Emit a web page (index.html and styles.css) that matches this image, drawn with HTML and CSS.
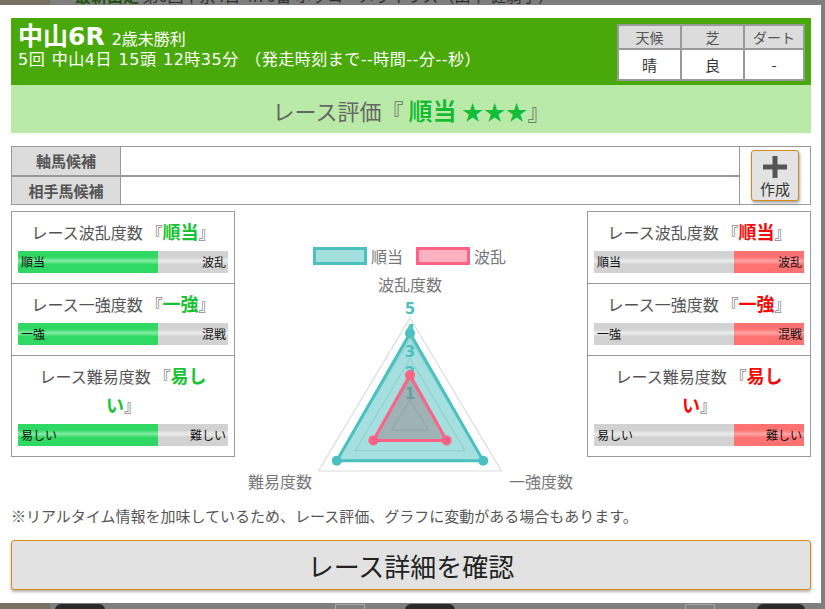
FILE: index.html
```html
<!DOCTYPE html>
<html lang="ja">
<head>
<meta charset="utf-8">
<title>中山6R</title>
<link rel="stylesheet" href="styles.css">
</head>
<body>
<div class="bd-top">
  <span class="bd-brown"></span>
  <span class="bd-text"><b>最新出走</b> 第6回中京4日 4R 6番 ホッコーメヴィウス（田中 健騎手）</span>
</div>
<div class="bd-bottom">
  <span class="bd-b brown"></span>
  <span class="bd-b dark d1"></span>
  <span class="bd-b box b1"></span>
  <span class="bd-b dark d2"></span>
  <span class="bd-b box b2"></span>
  <span class="bd-b dark d3"></span>
</div>

<div class="modal">
  <div class="header">
    <div class="hd-left">
      <div class="hd-title"><span class="race">中山6R</span><span class="cls">2歳未勝利</span></div>
      <div class="hd-info">5回 中山4日 15頭 12時35分 （発走時刻まで--時間--分--秒）</div>
    </div>
    <table class="weather">
      <colgroup><col class="c1"><col class="c2"><col class="c3"></colgroup>
      <tr><th>天候</th><th>芝</th><th>ダート</th></tr>
      <tr><td>晴</td><td>良</td><td>-</td></tr>
    </table>
  </div>

  <div class="rating"><span class="rating-text">レース評価『 <span class="good">順当</span> <span class="stars">★★★</span>』</span></div>

  <div class="cand">
    <div class="cand-rows">
      <div class="cand-row"><div class="cand-label">軸馬候補</div><div class="cand-input"></div></div>
      <div class="cand-row"><div class="cand-label">相手馬候補</div><div class="cand-input"></div></div>
    </div>
    <div class="cand-btn-cell">
      <button class="make-btn">
        <svg class="plus" width="24" height="22" viewBox="0 0 24 22"><rect x="9.5" y="0" width="5" height="22" fill="#555"/><rect x="0" y="8.5" width="24" height="5" fill="#555"/></svg>
        <span class="make-label">作成</span>
      </button>
    </div>
  </div>

  <div class="panels">
    <div class="idx-box">
      <div class="idx-sec">
        <div class="idx-title">レース波乱度数 『<span class="hl-green">順当</span>』</div>
        <div class="bar"><span class="seg seg-green">順当</span><span class="seg seg-gray right">波乱</span></div>
      </div>
      <div class="idx-sec">
        <div class="idx-title">レース一強度数 『<span class="hl-green">一強</span>』</div>
        <div class="bar"><span class="seg seg-green">一強</span><span class="seg seg-gray right">混戦</span></div>
      </div>
      <div class="idx-sec">
        <div class="idx-title">レース難易度数 『<span class="hl-green">易しい</span>』</div>
        <div class="bar"><span class="seg seg-green">易しい</span><span class="seg seg-gray right">難しい</span></div>
      </div>
    </div>

    <div class="chart">
      <svg width="352" height="285" viewBox="235 211 352 285">
        <rect x="314.5" y="248.5" width="51" height="15" fill="rgba(75,192,192,0.5)" stroke="#4bc0c0" stroke-width="3"/>
        <text class="lg" x="371" y="256">順当</text>
        <rect x="417.5" y="248.5" width="51" height="15" fill="rgba(255,99,132,0.5)" stroke="#ff6384" stroke-width="3"/>
        <text class="lg" x="474" y="256">波乱</text>
        <text class="pl" x="410" y="284" text-anchor="middle">波乱度数</text>
        <text class="pl" x="280" y="481" text-anchor="middle">難易度数</text>
        <text class="pl" x="541" y="481" text-anchor="middle">一強度数</text>
        <g fill="none" stroke="#dcdcdc" stroke-width="1.2">
          <polygon points="410,318 501.5,471 318.5,471"/>
          <polygon points="410,338.4 483.2,460.8 336.8,460.8"/>
          <polygon points="410,358.8 464.9,450.6 355.1,450.6"/>
          <polygon points="410,379.2 446.6,440.4 373.4,440.4"/>
          <polygon points="410,399.6 428.3,430.2 391.7,430.2"/>
        </g>
        <g class="tick" text-anchor="middle">
          <text x="410" y="309">5</text>
          <text x="410" y="331">4</text>
          <text x="410" y="352">3</text>
          <text x="410" y="373">2</text>
          <text x="410" y="394">1</text>
        </g>
        <polygon points="410,333.3 483.2,460.8 336.8,460.8" fill="rgba(75,192,192,0.5)" stroke="#4bc0c0" stroke-width="3" stroke-linejoin="round"/>
        <polygon points="410,375.1 446.6,440.4 373.4,440.4" fill="rgba(150,110,120,0.4)" stroke="#ff6384" stroke-width="3" stroke-linejoin="round"/>
        <g fill="#4bc0c0">
          <circle cx="410" cy="333.3" r="5"/>
          <circle cx="483.2" cy="460.8" r="5"/>
          <circle cx="336.8" cy="460.8" r="5"/>
        </g>
        <g fill="#ff6384">
          <circle cx="410" cy="375.1" r="5"/>
          <circle cx="446.6" cy="440.4" r="5"/>
          <circle cx="373.4" cy="440.4" r="5"/>
        </g>
      </svg>
    </div>

    <div class="idx-box">
      <div class="idx-sec">
        <div class="idx-title">レース波乱度数 『<span class="hl-red">順当</span>』</div>
        <div class="bar"><span class="seg seg-gray wide">順当</span><span class="seg seg-red right">波乱</span></div>
      </div>
      <div class="idx-sec">
        <div class="idx-title">レース一強度数 『<span class="hl-red">一強</span>』</div>
        <div class="bar"><span class="seg seg-gray wide">一強</span><span class="seg seg-red right">混戦</span></div>
      </div>
      <div class="idx-sec">
        <div class="idx-title">レース難易度数 『<span class="hl-red">易しい</span>』</div>
        <div class="bar"><span class="seg seg-gray wide">易しい</span><span class="seg seg-red right">難しい</span></div>
      </div>
    </div>
  </div>

  <p class="note">※リアルタイム情報を加味しているため、レース評価、グラフに変動がある場合もあります。</p>

  <button class="detail-btn">レース詳細を確認</button>
</div>
</body>
</html>
```

FILE: styles.css
```css
* { box-sizing: border-box; }

body {
  margin: 0;
  width: 825px;
  height: 609px;
  overflow: hidden;
  position: relative;
  background: #7f7f7f;
  font-family: "DejaVu Sans", "Noto Sans CJK JP", sans-serif;
}

/* dimmed page behind the dialog */
.bd-top {
  position: absolute;
  left: 0;
  top: 0;
  width: 825px;
  height: 5px;
  overflow: hidden;
}
.bd-brown {
  position: absolute;
  left: 0;
  top: 0;
  width: 50px;
  height: 5px;
  background: #797162;
}
.bd-text {
  position: absolute;
  left: 75px;
  top: -15px;
  font-size: 16px;
  line-height: 20px;
  white-space: nowrap;
  color: #2e2e2e;
  font-family: "Noto Sans CJK JP", sans-serif;
}
.bd-text b { color: #1f5410; }

.bd-bottom {
  position: absolute;
  left: 0;
  top: 603px;
  width: 825px;
  height: 6px;
}
.bd-b { position: absolute; top: 0; height: 6px; }
.bd-b.brown { left: 0; width: 50px; background: #797162; }
.bd-b.dark { background: #2a2a2a; border-radius: 6px 6px 0 0; top: 1px; }
.bd-b.d1 { left: 55px; width: 50px; }
.bd-b.d2 { left: 405px; width: 50px; }
.bd-b.d3 { left: 757px; width: 48px; }
.bd-b.box { border: 1px solid #a8a8a8; border-bottom: none; top: 1px; }
.bd-b.b1 { left: 335px; width: 30px; }
.bd-b.b2 { left: 685px; width: 30px; }

/* dialog */
.modal {
  position: relative;
  z-index: 1;
  margin-top: 5px;
  width: 821px;
  height: 598px;
  background: #fff;
  padding: 13px 10px 0 11px;
}

.header {
  display: flex;
  justify-content: space-between;
  height: 67px;
  background: #4aa90a;
}
.hd-left {
  padding: 5px 0 0 7px;
  color: #fff;
}
.hd-title {
  height: 27px;
  line-height: 27px;
  white-space: nowrap;
}
.race {
  font-size: 25px;
  font-weight: bold;
}
.cls {
  font-size: 16px;
  margin-left: 7px;
}
.hd-info {
  font-size: 16px;
  line-height: 20px;
  letter-spacing: 0.5px;
  word-spacing: 1px;
  white-space: nowrap;
}

.weather {
  margin: 6px 6px 0 0;
  width: 188px;
  height: 55px;
  border-collapse: collapse;
  table-layout: fixed;
  background: #fff;
  font-family: "Noto Sans CJK JP", sans-serif;
}
.weather .c1, .weather .c2 { width: 63px; }
.weather th, .weather td {
  border: 2px solid #999;
  padding: 0;
  text-align: center;
}
.weather th {
  background: #dcdcdc;
  color: #555;
  font-size: 14px;
  font-weight: normal;
  height: 24px;
  line-height: 20px;
}
.weather td {
  color: #333;
  font-size: 15px;
  height: 31px;
  line-height: 27px;
}

.rating {
  height: 48px;
  background: #b9eaa8;
  display: flex;
  align-items: center;
  justify-content: center;
  font-family: "Noto Sans CJK JP", sans-serif;
  font-size: 22px;
  color: #666;
}
.rating-text { white-space: pre; }
.rating .good {
  font-size: 24px;
  font-weight: bold;
  color: #14bb2c;
  text-shadow: 0 0 1px #fff;
}
.rating .stars {
  color: #13bd35;
  text-shadow: 0 0 1px #fff;
}

/* candidates */
.cand {
  display: flex;
  height: 59px;
  margin-top: 13px;
  border: 1px solid #999;
}
.cand-rows {
  flex: 1;
  display: flex;
  flex-direction: column;
  border-right: 1px solid #999;
}
.cand-row {
  flex: 1;
  display: flex;
}
.cand-row + .cand-row { border-top: 2px solid #999; }
.cand-label {
  width: 109px;
  background: #dcdcdc;
  border-right: 1px solid #999;
  display: flex;
  align-items: center;
  justify-content: center;
  font-family: "Noto Sans CJK JP", sans-serif;
  font-weight: bold;
  font-size: 15px;
  color: #555;
}
.cand-input { flex: 1; background: #fff; }
.cand-btn-cell {
  width: 70px;
  display: flex;
  align-items: center;
  justify-content: center;
}
.make-btn {
  width: 48px;
  height: 51px;
  padding: 5px 0 0;
  background: #e3e3e3;
  border: 1px solid #d9891a;
  border-radius: 3px;
  box-shadow: 1px 2px 3px rgba(0, 0, 0, 0.35);
  display: flex;
  flex-direction: column;
  align-items: center;
}
.plus { display: block; }
.make-label {
  font-family: "Noto Sans CJK JP", sans-serif;
  font-size: 15px;
  line-height: 20px;
  color: #333;
  margin-top: 1px;
}

/* index panels */
.panels {
  display: grid;
  grid-template-columns: 224px 352px 224px;
  align-items: start;
  margin-top: 6px;
}
.idx-box {
  border: 1px solid #999;
  font-family: "Noto Sans CJK JP", sans-serif;
}
.idx-sec { padding: 5px 6px 10px; }
.idx-sec + .idx-sec { border-top: 1px solid #999; }
.idx-title {
  padding: 0 8px;
  text-align: center;
  font-size: 16px;
  line-height: 28px;
  color: #555;
}
.hl-green, .hl-red {
  font-size: 18px;
  font-weight: bold;
}
.hl-green { color: #19c232; }
.hl-red { color: #f50a0a; }

.bar {
  display: flex;
  height: 22px;
  margin-top: 5px;
  font-size: 12px;
  line-height: 22px;
  color: #111;
}
.seg {
  padding: 0 3px;
  white-space: nowrap;
}
.seg.right { text-align: right; flex: 1; padding: 0 2px 0 3px; }
.seg-green {
  width: 140px;
  background: linear-gradient(#2fd862 0%, #2fd862 28%, #84eca4 45%, #2fd862 62%, #2fd862 100%);
}
.seg-gray {
  background: linear-gradient(#d2d2d2 0%, #d2d2d2 28%, #ececec 45%, #d2d2d2 62%, #d2d2d2 100%);
}
.seg-gray.wide { width: 140px; }
.seg-red {
  background: linear-gradient(#ff7272 0%, #ff7272 28%, #ffa6a6 45%, #ff7272 62%, #ff7272 100%);
}

.chart svg { display: block; }
.chart text {
  font-family: "Noto Sans CJK JP", sans-serif;
  dominant-baseline: central;
}
.chart .lg { font-size: 16px; fill: #777; }
.chart .pl { font-size: 16px; fill: #777; }
.chart .tick text {
  font-family: "DejaVu Sans", sans-serif;
  font-size: 15px;
  font-weight: bold;
  fill: #4bc0c0;
}

.note {
  margin: 10px 0 0;
  font-family: "Noto Sans CJK JP", sans-serif;
  font-size: 15px;
  line-height: 20px;
  color: #555;
  white-space: nowrap;
}

.detail-btn {
  display: block;
  width: 100%;
  height: 50px;
  margin-top: 14px;
  background: #e2e2e2;
  border: 1px solid #d9891a;
  border-radius: 3px;
  box-shadow: 0 2px 3px rgba(0, 0, 0, 0.3);
  font-family: "Noto Sans CJK JP", sans-serif;
  font-size: 26px;
  color: #222;
  padding: 0;
}
```
